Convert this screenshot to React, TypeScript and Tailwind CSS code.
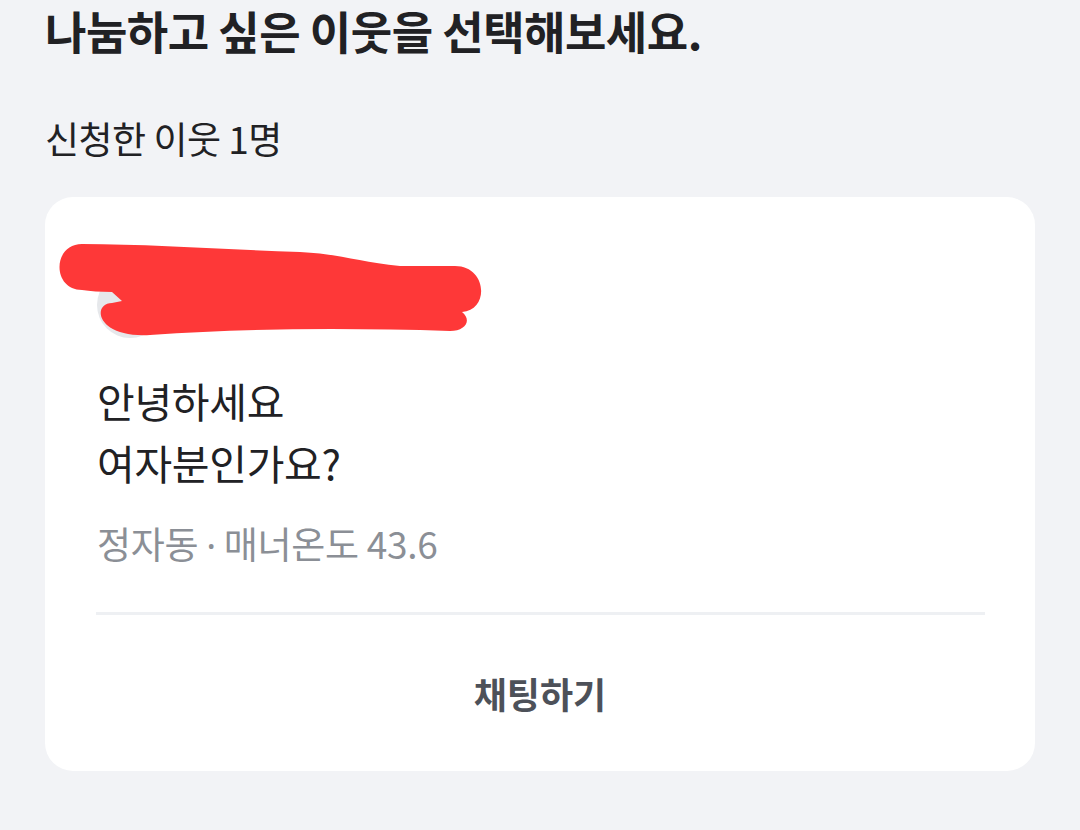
const font = { fontFamily: '"Noto Sans CJK KR", "Noto Sans", sans-serif' };

const Scribble = () => (
    <svg className="absolute left-0 top-0 pointer-events-none" width="520" height="360" viewBox="0 0 520 360">
        <path
            d="M 82 244 C 150 244, 230 250, 300 252 C 340 254, 360 262, 400 266 L 455 266 C 487 266, 490 310, 462 312 C 472 320, 466 331, 450 331 C 350 328, 250 328, 150 335 C 95 338, 92 303, 112 303 L 122 301 L 112 292 C 100 292, 90 291, 82 290 C 52 290, 52 244, 82 244 Z"
            fill="#fe3838"
        />
    </svg>
);

export default function App() {
    return (
        <div className="relative min-h-screen bg-[#f2f3f6] px-[45px] text-[#212124]" style={font}>
            {/* header */}
            <h1 className="text-[45px] font-bold leading-[62px] tracking-[-0.5px]">나눔하고 싶은 이웃을 선택해보세요.</h1>
            <p className="mt-[51px] text-[37px] leading-[50px] tracking-[-0.5px]">신청한 이웃 1명</p>

            {/* applicant card */}
            <div className="mt-[34px] rounded-[28px] bg-white">
                <div className="px-[52px] pt-[75px]">
                    <div className="flex items-center gap-4">
                        <div className="h-[66px] w-[66px] rounded-full bg-[#e6e8eb]" />
                        <span className="text-[30px] font-bold">이웃</span>
                    </div>
                    <div className="mt-[31px] text-[41px] leading-[62px] tracking-[-0.3px]">
                        <p>안녕하세요</p>
                        <p>여자분인가요?</p>
                    </div>
                    <p className="mt-[25px] h-[50px] text-[37px] leading-[50px] tracking-[-0.3px] text-[#8b8f96]">
                        정자동 <span style={{ fontFamily: '"Noto Sans", sans-serif' }}>·</span> 매너온도 43.6
                    </p>
                </div>
                <div className="ml-[51px] mr-[50px] mt-[44px] h-[3px] bg-[#eef0f3]" />
                <button className="flex h-[156px] w-full items-center justify-center text-[36px] font-bold text-[#4d5159]">
                    채팅하기
                </button>
            </div>

            <Scribble />
        </div>
    );
}
